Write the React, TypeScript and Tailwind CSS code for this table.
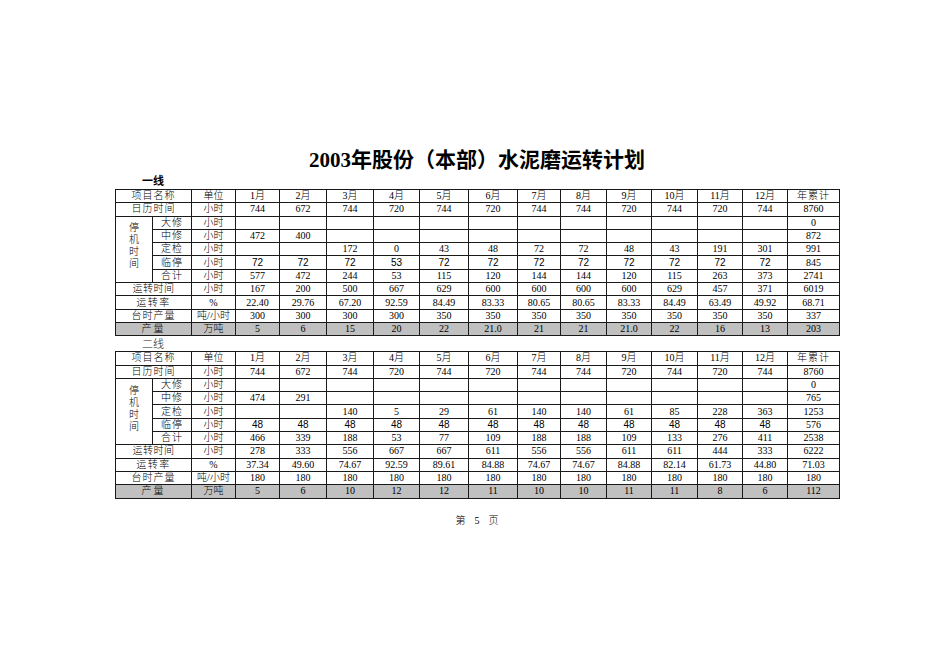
const months = ["1月", "2月", "3月", "4月", "5月", "6月", "7月", "8月", "9月", "10月", "11月", "12月"];
const colWidths = [37, 39, 44, 44, 47, 47, 46, 49, 49, 43, 46, 45, 46, 45, 45, 52];

type Line = {
  label: string;
  bold: boolean;
  rows: {
    zhongxiu: string[];
    dingjian: string[];
    linting: string[];
    heji: string[];
    yunzhuan: string[];
    lv: string[];
    taishi: string[];
    chanliang: string[];
  };
};

const calendar = ["744", "672", "744", "720", "744", "720", "744", "744", "720", "744", "720", "744", "8760"];

const lines: Line[] = [
  {
    label: "一线",
    bold: true,
    rows: {
      zhongxiu: ["472", "400", "", "", "", "", "", "", "", "", "", "", "872"],
      dingjian: ["", "", "172", "0", "43", "48", "72", "72", "48", "43", "191", "301", "991"],
      linting: ["72", "72", "72", "53", "72", "72", "72", "72", "72", "72", "72", "72", "845"],
      heji: ["577", "472", "244", "53", "115", "120", "144", "144", "120", "115", "263", "373", "2741"],
      yunzhuan: ["167", "200", "500", "667", "629", "600", "600", "600", "600", "629", "457", "371", "6019"],
      lv: ["22.40", "29.76", "67.20", "92.59", "84.49", "83.33", "80.65", "80.65", "83.33", "84.49", "63.49", "49.92", "68.71"],
      taishi: ["300", "300", "300", "300", "350", "350", "350", "350", "350", "350", "350", "350", "337"],
      chanliang: ["5", "6", "15", "20", "22", "21.0", "21", "21", "21.0", "22", "16", "13", "203"],
    },
  },
  {
    label: "二线",
    bold: false,
    rows: {
      zhongxiu: ["474", "291", "", "", "", "", "", "", "", "", "", "", "765"],
      dingjian: ["", "", "140", "5", "29", "61", "140", "140", "61", "85", "228", "363", "1253"],
      linting: ["48", "48", "48", "48", "48", "48", "48", "48", "48", "48", "48", "48", "576"],
      heji: ["466", "339", "188", "53", "77", "109", "188", "188", "109", "133", "276", "411", "2538"],
      yunzhuan: ["278", "333", "556", "667", "667", "611", "556", "556", "611", "611", "444", "333", "6222"],
      lv: ["37.34", "49.60", "74.67", "92.59", "89.61", "84.88", "74.67", "74.67", "84.88", "82.14", "61.73", "44.80", "71.03"],
      taishi: ["180", "180", "180", "180", "180", "180", "180", "180", "180", "180", "180", "180", "180"],
      chanliang: ["5", "6", "10", "12", "12", "11", "10", "10", "11", "11", "8", "6", "112"],
    },
  },
];

const cell = "border border-[#1a1a1a] p-0 text-center align-middle leading-[12px] whitespace-nowrap overflow-hidden";

function Values({ values, sans }: { values: string[]; sans?: boolean }) {
  return (
    <>
      {values.map((v, i) => (
        <td
          key={i}
          className={`${cell} ${sans && i < 12 ? "font-['Liberation_Sans',sans-serif] text-[10px] font-normal" : ""}`}
        >
          {v}
        </td>
      ))}
    </>
  );
}

function PlanTable({ line }: { line: Line }) {
  const r = line.rows;
  const blanks = Array(12).fill("");
  return (
    <table className="table-fixed border-collapse w-[724px] border border-black font-light">
      <colgroup>
        {colWidths.map((w, i) => (
          <col key={i} style={{ width: w }} />
        ))}
      </colgroup>
      <tbody>
        <tr className="h-[13.3px]">
          <td colSpan={2} className={`${cell} tracking-[1px]`}>项目名称</td>
          <td className={cell}>单位</td>
          {months.map((m) => (
            <td key={m} className={cell}>{m}</td>
          ))}
          <td className={`${cell} tracking-[1px]`}>年累计</td>
        </tr>
        <tr className="h-[13.3px]">
          <td colSpan={2} className={`${cell} tracking-[1px]`}>日历时间</td>
          <td className={cell}>小时</td>
          <Values values={calendar} />
        </tr>
        <tr className="h-[13.3px]">
          <td rowSpan={5} className={`${cell} leading-[11px] pb-[6px]`}>
            <div className="flex flex-col items-center">
              <span>停</span>
              <span>机</span>
              <span>时</span>
              <span>间</span>
            </div>
          </td>
          <td className={`${cell} tracking-[1px]`}>大修</td>
          <td className={cell}>小时</td>
          <Values values={[...blanks, "0"]} />
        </tr>
        <tr className="h-[13.3px]">
          <td className={`${cell} tracking-[1px]`}>中修</td>
          <td className={cell}>小时</td>
          <Values values={r.zhongxiu} />
        </tr>
        <tr className="h-[13.3px]">
          <td className={`${cell} tracking-[1px]`}>定检</td>
          <td className={cell}>小时</td>
          <Values values={r.dingjian} />
        </tr>
        <tr className="h-[13.3px]">
          <td className={`${cell} tracking-[1px]`}>临停</td>
          <td className={cell}>小时</td>
          <Values values={r.linting} sans />
        </tr>
        <tr className="h-[13.3px]">
          <td className={`${cell} tracking-[1px]`}>合计</td>
          <td className={cell}>小时</td>
          <Values values={r.heji} />
        </tr>
        <tr className="h-[13.3px]">
          <td colSpan={2} className={`${cell} tracking-[0.5px]`}>运转时间</td>
          <td className={cell}>小时</td>
          <Values values={r.yunzhuan} />
        </tr>
        <tr className="h-[13.3px]">
          <td colSpan={2} className={`${cell} tracking-[1.5px]`}>运转率</td>
          <td className={cell}>%</td>
          <Values values={r.lv} />
        </tr>
        <tr className="h-[13.3px]">
          <td colSpan={2} className={`${cell} tracking-[1px]`}>台时产量</td>
          <td className={cell}>吨/小时</td>
          <Values values={r.taishi} />
        </tr>
        <tr className="h-[13.3px] bg-[#c0c0c0]">
          <td colSpan={2} className={`${cell} tracking-[2px]`}>产量</td>
          <td className={cell}>万吨</td>
          <Values values={r.chanliang} />
        </tr>
      </tbody>
    </table>
  );
}

export default function App() {
  return (
    <div className="w-[950px] h-[672px] bg-white text-black font-['Liberation_Serif','Noto_Sans_CJK_SC',serif] text-[10px]">
      <div className="ml-[115px] w-[724px] pt-[146px]">
        <div className="h-[28px] flex items-center justify-center text-[21px] font-bold leading-[28px]">
          2003年股份（本部）水泥磨运转计划
        </div>
        {lines.map((line) => (
          <div key={line.label}>
            <div
              className={`h-[15px] pl-[27px] flex items-center text-[11px] ${
                line.bold ? "font-bold" : "font-light text-[#222]"
              }`}
            >
              {line.label}
            </div>
            <PlanTable line={line} />
          </div>
        ))}
        <div className="mt-[16px] flex justify-center gap-[9px] text-[10px] leading-[12px] font-light">
          <span>第</span>
          <span>5</span>
          <span>页</span>
        </div>
      </div>
    </div>
  );
}
